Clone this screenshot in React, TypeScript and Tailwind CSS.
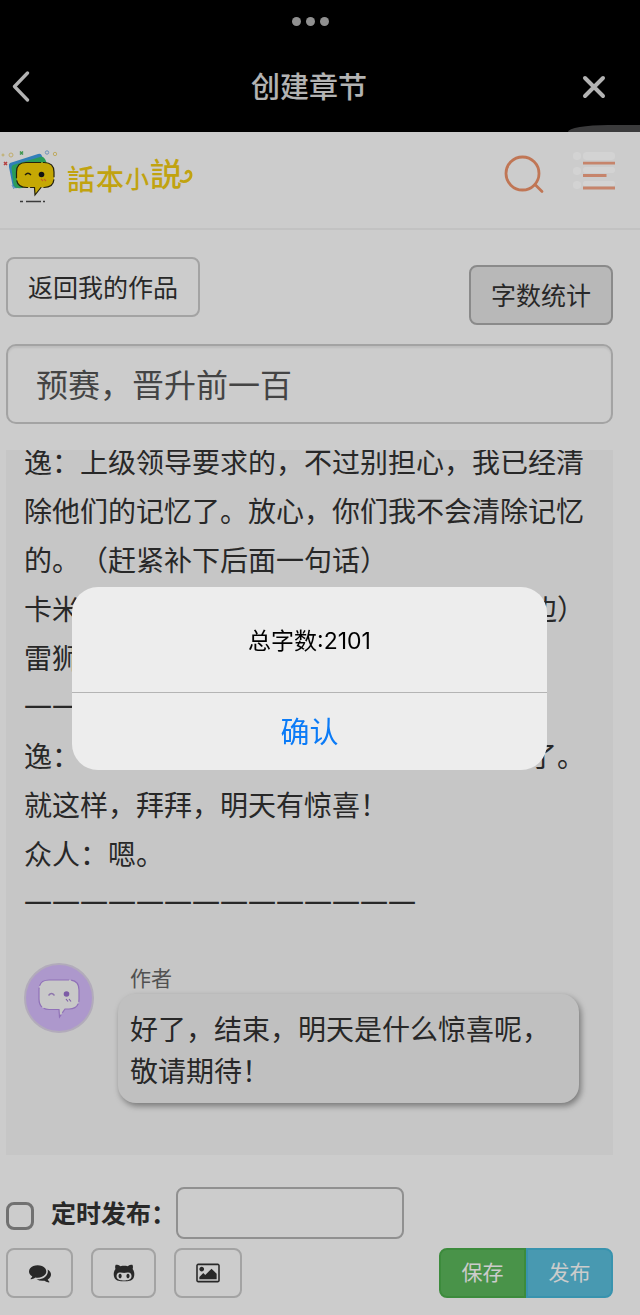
import { FaGithubAlt } from "react-icons/fa";

function Mascot() {
  return (
    <svg width="60" height="56" viewBox="0 0 60 56" fill="none" aria-hidden="true">
      <path d="M10 13 L38 4 Q41 3 42 6 L48 18 L20 37 Q14 40 12.500 35 L9 17 Q8.500 14 10 13Z" fill="#3f9fe8" />
      <path d="M13 15 L40 7 Q43 6 45 9 L50 20 L22 38 Q14 39 13.500 34 L11.500 18 Q11.500 16 13 15Z" fill="#35c46f" />
      <path d="M26 12.500 H44 Q54 12.500 54 22 V28 Q54 37.500 44 37.500 H41 L35 45 L34.500 37.500 H27 Q16.500 37.500 16.500 28 V22 Q16.500 12.500 26 12.500Z" fill="#f7d305" stroke="#2d2a12" strokeWidth="1.200" strokeDasharray="15 2 22 2" />
      <path d="M25 25 Q28 21.500 31 25" stroke="#2d2a12" strokeWidth="1.300" />
      <circle cx="41.500" cy="24.500" r="2.800" fill="#171717" />
      <path d="M41 29 l2 2 M44 29 l2 2" stroke="#f27c28" strokeWidth="1.200" />
      <path d="M20 51.500 h3 M26 51.500 h15 M43 51.500 h2" stroke="#4a4a4a" strokeWidth="1.300" />
      <path d="M4 12 l3 3 M7 12 l-3 3" stroke="#e25050" strokeWidth="1.500" />
      <path d="M20 1.500 l3 3 M23 1.500 l-3 3" stroke="#4cbb62" strokeWidth="1.500" />
      <circle cx="11" cy="5" r="2" stroke="#f3d98a" />
      <circle cx="47" cy="2.500" r="1.700" stroke="#8bb8ea" />
      <circle cx="55" cy="4" r="1.700" stroke="#efd77e" />
      <path d="M3 3.500 v3 M1.500 5 h3" stroke="#efd77e" />
      <path d="M12 35 l2 4" stroke="#6bb8ee" />
    </svg>
  );
}

function Avatar() {
  return (
    <svg className="size-[70px] shrink-0" viewBox="0 0 70 70" fill="none" aria-hidden="true">
      <circle cx="35" cy="35" r="34" fill="#d9bfff" stroke="#dfd6ea" strokeWidth="2" />
      <path d="M25 17 H45 Q55 17 55 27 V36 Q55 46 45 46 H41 L35.500 54 L35 46.500 H25 Q15 46 15 36 V27 Q15 17 25 17Z" fill="#fafafa" stroke="#b48ee6" strokeWidth="1.200" strokeDasharray="20 2 26 2" />
      <path d="M24.500 32.500 Q27.500 28.500 30.500 32.500" stroke="#b294d8" strokeWidth="1.300" />
      <circle cx="42.500" cy="31" r="2.800" fill="#9c72d0" />
      <path d="M42 36 l2 2.500 M45 36 l2 2.500" stroke="#9c72d0" strokeWidth="1.100" />
    </svg>
  );
}

function CommentsIcon() {
  return (
    <svg className="size-[22px]" viewBox="0 0 1792 1792" fill="currentColor" aria-hidden="true">
      <path d="M1408 768q0 139-94 257t-256.500 186.500-353.500 68.500q-86 0-176-16-124 88-278 128-36 9-86 16h-3q-11 0-20.500-8t-11.500-21q-1-3-1-6.500t.5-6.500 2-6l2.500-5 3.500-5.500 4-5 4.500-5 4-4.500q5-6 23-25t26-29.500 22.500-29 25-38.500 20.500-44q-124-72-195-177t-71-224q0-139 94-257t256.500-186.500 353.500-68.500 353.500 68.500 256.500 186.500 94 257zm384 256q0 120-71 224.500t-195 176.500q10 24 20.500 44t25 38.500 22.500 29 26 29.500 23 25q1 1 4 4.500t4.500 5 4 5 3.500 5.500l2.500 5 2 6 .5 6.500-1 6.500q-3 14-13 22t-22 7q-50-7-86-16-154-40-278-128-90 16-176 16-271 0-472-132 58 4 88 4 161 0 309-45t264-129q125-92 192-212t67-254q0-77-23-152 129 71 204 178t75 230z" />
    </svg>
  );
}

function PictureIcon() {
  return (
    <svg className="h-[22px] w-6" viewBox="0 0 1920 1792" fill="currentColor" aria-hidden="true">
      <path d="M640 576q0 80-56 136t-136 56-136-56-56-136 56-136 136-56 136 56 56 136zm1024 384v448h-1408v-192l320-320 160 160 512-512zm96-704h-1600q-13 0-22.500 9.500t-9.500 22.500v1216q0 13 9.500 22.500t22.500 9.500h1600q13 0 22.500-9.500t9.500-22.500v-1216q0-13-9.500-22.500t-22.500-9.500zm160 32v1216q0 66-47 113t-113 47h-1600q-66 0-113-47t-47-113v-1216q0-66 47-113t113-47h1600q66 0 113 47t47 113z" />
    </svg>
  );
}

function TitleBar() {
  return (
    <header className="relative bg-black text-[#e0e0e0]">
      <div className="flex h-[42px] items-center justify-center gap-[5px] pr-5">
        <span className="size-[9px] rounded-full bg-[#b4b4b4]" />
        <span className="size-[9px] rounded-full bg-[#b4b4b4]" />
        <span className="size-[9px] rounded-full bg-[#b4b4b4]" />
      </div>
      <div className="flex h-[90px] items-center justify-between pr-[34px] pl-3">
        <button type="button" aria-label="返回" className="w-6">
          <svg width="18" height="32" viewBox="0 0 18 32" fill="none" stroke="currentColor" strokeWidth="3.300" strokeLinecap="round" strokeLinejoin="round">
            <path d="M15.500 2 L2.500 15.500 L15.500 29" />
          </svg>
        </button>
        <h1 className="pb-1 text-[29px] leading-10 font-medium">创建章节</h1>
        <button type="button" aria-label="关闭">
          <svg width="24" height="24" viewBox="0 0 24 24" fill="none" stroke="currentColor" strokeWidth="4" strokeLinecap="round">
            <path d="M3 3 L21 21 M21 3 L3 21" />
          </svg>
        </button>
      </div>
      <div className="absolute right-0 bottom-0 h-[7px] w-[72px] rounded-tl-[40px_7px] bg-[#4a4a4c]" />
    </header>
  );
}

function SiteBar() {
  return (
    <nav className="flex h-[98px] items-start justify-between border-b-2 border-[#f3f3f3] pt-[18px] pr-6">
      <a href="#home" className="flex items-start">
        <Mascot />
        <span className="mt-[6px] ml-[7px] flex items-end gap-px font-['Noto_Sans_CJK_TC','Noto_Sans_CJK_SC',sans-serif] leading-none font-medium text-[#f2cc14]">
          <span className="text-[28px]">話</span>
          <span className="text-[28px]">本</span>
          <span className="pb-[2px] text-[24px]">小</span>
          <span className="pb-1 text-[32px]">説</span>
          <svg className="mb-2 -ml-1" width="14" height="16" viewBox="0 0 14 16" fill="none" stroke="currentColor" strokeWidth="2.800" strokeLinecap="round">
            <path d="M2 13 C7 15 12 11 12 7 C12 3 8 2 7 5" />
          </svg>
        </span>
      </a>
      <div className="flex gap-[28px]">
        <button type="button" aria-label="搜索">
          <svg width="42" height="48" viewBox="0 0 42 48" fill="none" stroke="#f1946b" strokeWidth="2.800" strokeLinecap="round">
            <circle cx="20.500" cy="23.500" r="16.500" />
            <path d="M33 34.500 L40 41.500" />
          </svg>
        </button>
        <button type="button" aria-label="菜单">
          <svg width="44" height="48" viewBox="0 0 44 48" fill="none">
            <path d="M11 13.200 H43 M11 25.500 H34.500 M11 38 H43" stroke="#f8a686" strokeWidth="2.800" />
          </svg>
        </button>
      </div>
    </nav>
  );
}

function Chapter() {
  return (
    <section className="overflow-hidden bg-[#f8f8f8] pr-[28px] pb-[52px] pl-[18px]">
      <div className="-mt-[13px] text-[28px] leading-[49px]">
        <p>逸：上级领导要求的，不过别担心，我已经清除他们的记忆了。放心，你们我不会清除记忆的。（赶紧补下后面一句话）</p>
        <p className="flex justify-between">
          <span>卡米</span>
          <span>边）</span>
        </p>
        <p>雷狮</p>
        <p>一一</p>
        <p className="flex justify-between">
          <span>逸：</span>
          <span>了。</span>
        </p>
        <p>就这样，拜拜，明天有惊喜！</p>
        <p>众人：嗯。</p>
        <p>一一一一一一一一一一一一一一</p>
      </div>
      <div className="mt-[36px] flex items-start gap-6 pr-[6px]">
        <Avatar />
        <div className="min-w-0 flex-1">
          <div className="pb-[3px] pl-3 text-[21px] leading-7 text-[#666]">作者</div>
          <p className="rounded-[18px] bg-[#f1f1f1] px-3 pt-[13px] pb-3 text-[28px] leading-[42px] shadow-[2px_3px_6px_rgba(0,0,0,0.4)]">
            好了，结束，明天是什么惊喜呢，敬请期待！
          </p>
        </div>
      </div>
    </section>
  );
}

function Dialog() {
  return (
    <div className="fixed inset-0 flex items-center justify-center bg-black/20 pt-[41px] pr-[21px]">
      <div role="alertdialog" aria-labelledby="count" className="w-[475px] max-w-full overflow-hidden rounded-[26px] bg-[#ededed]">
        <p id="count" className="flex h-[105px] items-center justify-center pt-1 font-['Inter','Noto_Sans_CJK_SC',sans-serif] text-[23px] leading-8 text-black">
          总字数:2101
        </p>
        <button type="button" className="flex h-[78px] w-full items-center justify-center border-t border-[#b4b4b4] pb-[2px] text-[29px] leading-10 text-[#0b7bf7]">
          确认
        </button>
      </div>
    </div>
  );
}

function GhostPanel() {
  return (
    <svg className="pointer-events-none fixed top-[150px] right-[22px] opacity-15" width="46" height="42" viewBox="0 0 46 42" fill="#ffffff" aria-hidden="true">
      <circle cx="5" cy="6" r="4" />
      <rect x="11" y="2" width="32" height="8" rx="4" />
      <circle cx="5" cy="21" r="4" />
      <rect x="11" y="17" width="32" height="6" rx="3" />
      <circle cx="5" cy="35" r="4" />
      <rect x="11" y="31" width="32" height="5" rx="2.500" />
    </svg>
  );
}

export default function App() {
  return (
    <div className="min-h-screen bg-white font-['Noto_Sans_CJK_SC',sans-serif] text-[#333] [text-spacing-trim:space-all]">
      <TitleBar />
      <SiteBar />
      <main className="pt-[27px] pr-[27px] pb-[17px] pl-[6px]">
        <div className="flex h-[68px] justify-between">
          <a href="#works" className="self-start rounded-lg border-2 border-[#ccc] px-[20px] pt-[9px] pb-[11px] text-[25px] leading-9">
            返回我的作品
          </a>
          <button type="button" className="self-end rounded-lg border-2 border-[#adadad] bg-[#e6e6e6] px-[20px] pt-[9px] pb-[11px] text-[25px] leading-9">
            字数统计
          </button>
        </div>
        <input
          aria-label="章节标题"
          defaultValue="预赛，晋升前一百"
          className="mt-[19px] block h-[80px] w-full rounded-[10px] border-2 border-[#ccc] px-[28px] pb-[3px] text-[32px] text-[#555] shadow-[inset_0_2px_2px_rgba(0,0,0,0.07)]"
        />
        <div className="mt-[26px]">
          <Chapter />
        </div>
        <div className="mt-[32px] flex h-[52px] items-center">
          <input id="timed" type="checkbox" className="mt-[6px] mr-[17px] size-[28px] appearance-none rounded-lg border-3 border-[#8e8e8e]" />
          <label htmlFor="timed" className="pb-[2px] text-[25px] leading-9 font-bold">定时发布：</label>
          <input aria-label="发布时间" className="h-[52px] w-[228px] rounded-lg border-2 border-[#b4b4b4] px-3 text-[24px]" />
        </div>
        <div className="mt-[9px] flex h-[50px] justify-between">
          <div className="flex gap-[18px]">
            <button type="button" aria-label="对话" className="flex w-[67px] items-center justify-center rounded-lg border-2 border-[#ccc]">
              <CommentsIcon />
            </button>
            <button type="button" aria-label="角色" className="flex w-[65px] items-center justify-center rounded-lg border-2 border-[#ccc]">
              <FaGithubAlt className="size-[22px]" />
            </button>
            <button type="button" aria-label="图片" className="flex w-[68px] items-center justify-center rounded-lg border-2 border-[#ccc]">
              <PictureIcon />
            </button>
          </div>
          <div className="flex text-[21px] text-white">
            <button type="button" className="w-[87px] rounded-l-lg border-2 border-[#4cae4c] bg-[#5cb85c] pb-[2px]">保存</button>
            <button type="button" className="w-[87px] rounded-r-lg border-2 border-[#46b8da] bg-[#5bc0de] pb-[2px]">发布</button>
          </div>
        </div>
      </main>
      <Dialog />
      <GhostPanel />
    </div>
  );
}
